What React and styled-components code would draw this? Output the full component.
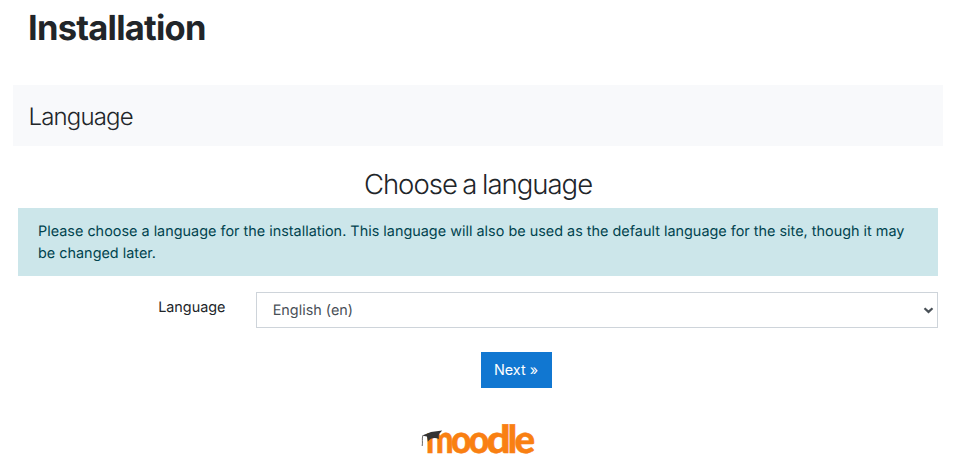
import React from 'react';
import styled, { createGlobalStyle } from 'styled-components';

const Global = createGlobalStyle`
  *, *::before, *::after { box-sizing: border-box; }
  body {
    margin: 0;
    background: #fff;
    color: #212529;
    font: 400 14.4px/22px Inter, "Liberation Sans", sans-serif;
    text-rendering: geometricPrecision;
  }
`;

const Page = styled.div`
  height: 474px;
  padding: 8px 13px 0;
  overflow: hidden;
`;

const Title = styled.h1`
  margin: 0 0 35px 15px;
  font-size: 34.5px;
  line-height: 42px;
  font-weight: 700;
  letter-spacing: -0.75px;
`;

const StageBar = styled.div`
  height: 61px;
  padding: 16px 15.5px;
  background: #f8f9fb;
`;

const StageName = styled.h3`
  margin: 0;
  font-size: 24px;
  line-height: 31px;
  font-weight: 300;
  letter-spacing: -0.85px;
`;

const Content = styled.main`
  padding: 21px 5px 0;
`;

const Heading = styled.h2`
  margin: 0 0 6px;
  text-align: center;
  font-size: 27.5px;
  line-height: 35px;
  font-weight: 300;
  letter-spacing: -1px;
  word-spacing: -1.2px;
`;

const Notice = styled.div`
  height: 68px;
  margin-bottom: 16px;
  padding: 13px 20px 11px;
  background: #cce6ea;
  color: #00434e;
`;

const Line = styled.span`
  display: block;
  white-space: nowrap;
  letter-spacing: 0.01px;
`;

const Field = styled.div`
  display: grid;
  grid-template-columns: 207.5px 1fr;
  column-gap: 30.5px;
`;

const Label = styled.label`
  padding-top: 5px;
  text-align: right;
`;

const SelectBox = styled.div`
  display: flex;
  align-items: center;
  justify-content: space-between;
  height: 36px;
  padding: 2px 3px 0 15.7px;
  border: 1px solid #ced4da;
  color: #495057;
`;

const Actions = styled.div`
  display: flex;
  justify-content: center;
  margin: 24px 0 34px 77px;
`;

const NextButton = styled.button`
  width: 71px;
  height: 36px;
  padding: 0 1px 0 0;
  border: 0;
  background: #1177d1;
  color: #fff;
  font: inherit;
  text-align: center;
`;

const Footer = styled.footer`
  display: flex;
  justify-content: center;
`;

const LogoSvg = styled.svg`
  display: block;
  overflow: visible;
`;

const LogoText = styled.text`
  font-family: Lato, sans-serif;
  font-weight: 900;
  font-size: 38.5px;
  fill: #f98012;
  stroke: #f98012;
  stroke-width: 0.5px;
`;

const Chevron = () => (
  <svg width="11" height="8" viewBox="0 0 11 8">
    <path d="M1.5 1.2l4 3.7 4-3.7" fill="none" stroke="#495057" strokeWidth="2.2" />
  </svg>
);

const letters = [
  { char: 'm', x: 4.9, width: 27.6 },
  { char: 'o', x: 30.1, width: 20.5 },
  { char: 'o', x: 47.8, width: 20.5 },
  { char: 'd', x: 65.5, width: 24.2 },
  { char: 'l', x: 86.8, width: 9.4 },
  { char: 'e', x: 93.4, width: 20.6 },
];

const MoodleLogo = () => (
  <LogoSvg width="114" height="32" viewBox="0 0 114 32" aria-label="moodle">
    <LogoText y="30.5">
      {letters.map((l, i) => (
        <tspan key={i} x={l.x} textLength={l.width} lengthAdjust="spacingAndGlyphs">{l.char}</tspan>
      ))}
    </LogoText>
    <path d="M5.8 13.2L17.8 11.8V17C14.5 15.4 9.5 15.6 6.8 19.8Z" fill="#333" />
    <path d="M1.2 13.6L10 10 21.2 8.5 17.3 13 12 14.2 8 15Z" fill="#333" />
    <path d="M1.8 13.5C0.8 17 1.9 20 1.2 24" fill="none" stroke="#555" strokeWidth="0.9" />
  </LogoSvg>
);

export default function App() {
  return (
    <Page>
      <Global />
      <Title>Installation</Title>
      <StageBar>
        <StageName>Language</StageName>
      </StageBar>
      <Content>
        <Heading>Choose a language</Heading>
        <Notice>
          <Line>Please choose a language for the installation. This language will also be used as the default language for the site, though it may</Line>
          <Line>be changed later.</Line>
        </Notice>
        <Field>
          <Label>Language</Label>
          <SelectBox>
            English (en)
            <Chevron />
          </SelectBox>
        </Field>
        <Actions>
          <NextButton>Next »</NextButton>
        </Actions>
        <Footer>
          <MoodleLogo />
        </Footer>
      </Content>
    </Page>
  );
}
